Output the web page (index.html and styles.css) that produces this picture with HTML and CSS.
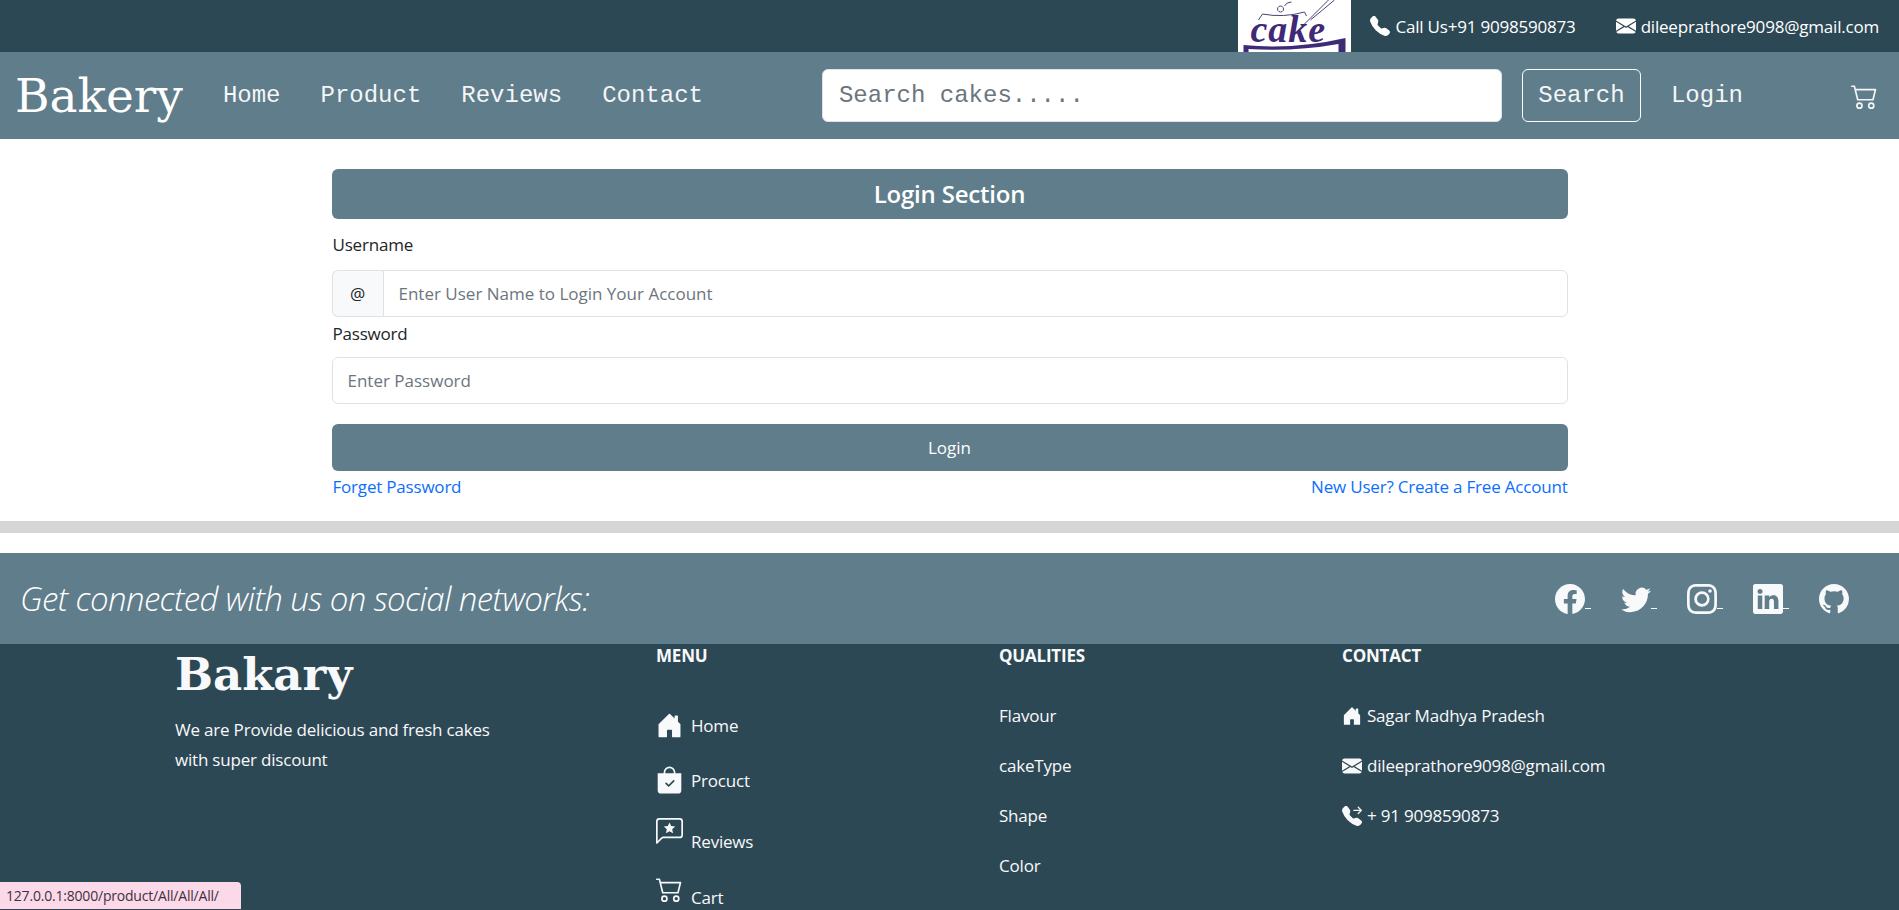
FILE: index.html
```html
<!DOCTYPE html>
<html lang="en">
<head>
<meta charset="utf-8">
<title>Bakery</title>
<link rel="stylesheet" href="styles.css">
</head>
<body>
<div class="topbar">
  <div class="logo">
    <svg class="logo-art" viewBox="0 0 112 52" aria-hidden="true">
      <path d="M20 20 L24 14 Q45 18 66 12 L68 16 M42 12 a3 3 0 1 1 .1 0 M46 6 q2-4 7-4 M66 24 L90 0 M72 20 L96 0" fill="none" stroke="#4a4370" stroke-width="1"/>
      <path d="M5 45 Q55 50 107 38 L107 52 L100 52 L100 44 Q55 52 10 49 L10 52 L5 52 Z" fill="#3f2a78"/>
      <text class="logo-word" x="12" y="42">cake</text>
    </svg>
  </div>
  <span class="top-item"><svg class="top-icon" viewBox="0 0 16 16"><path d="M1.885.511a1.745 1.745 0 0 1 2.61.163L6.29 2.98c.329.423.445.974.315 1.494l-.547 2.19a.678.678 0 0 0 .178.643l2.457 2.457a.678.678 0 0 0 .644.178l2.189-.547a1.745 1.745 0 0 1 1.494.315l2.306 1.794c.829.645.905 1.87.163 2.611l-1.034 1.034c-.74.74-1.846 1.065-2.877.702a18.634 18.634 0 0 1-7.01-4.42 18.634 18.634 0 0 1-4.42-7.009c-.362-1.03-.037-2.137.703-2.877L1.885.511z"/></svg>Call Us+91 9098590873</span>
  <span class="top-item top-mail"><svg class="top-icon" viewBox="0 0 16 16"><path d="M.05 3.555A2 2 0 0 1 2 2h12a2 2 0 0 1 1.95 1.555L8 8.414.05 3.555zM0 4.697v7.104l5.803-3.558L0 4.697zM6.761 8.83l-6.57 4.027A2 2 0 0 0 2 14h12a2 2 0 0 0 1.808-1.144l-6.57-4.027L8 9.586l-1.239-.757zm3.436-.586L16 11.801V4.697l-5.803 3.546z"/></svg>dileeprathore9098@gmail.com</span>
</div>

<nav class="navbar">
  <a class="brand" href="#">Bakery</a>
  <ul class="nav-links">
    <li><a href="#">Home</a></li>
    <li><a href="#">Product</a></li>
    <li><a href="#">Reviews</a></li>
    <li><a href="#">Contact</a></li>
  </ul>
  <form class="search">
    <input class="search-input" type="text" placeholder="Search cakes.....">
    <button class="search-btn" type="button">Search</button>
  </form>
  <a class="nav-login" href="#">Login</a>
  <a class="nav-cart" href="#"><svg viewBox="0 0 16 16"><path d="M0 2.5A.5.5 0 0 1 .5 2H2a.5.5 0 0 1 .485.379L2.89 4H14.5a.5.5 0 0 1 .485.621l-1.5 6A.5.5 0 0 1 13 11H4a.5.5 0 0 1-.485-.379L1.61 3H.5a.5.5 0 0 1-.5-.5zM3.14 5l1.25 5h8.22l1.25-5H3.14zM5 13a1 1 0 1 0 0 2 1 1 0 0 0 0-2zm-2 1a2 2 0 1 1 4 0 2 2 0 0 1-4 0zm9-1a1 1 0 1 0 0 2 1 1 0 0 0 0-2zm-2 1a2 2 0 1 1 4 0 2 2 0 0 1-4 0z"/></svg></a>
</nav>

<main class="login">
  <h2 class="login-title">Login Section</h2>
  <label class="field-label">Username</label>
  <div class="input-group">
    <span class="addon">@</span>
    <input class="field field-joined" type="text" placeholder="Enter User Name to Login Your Account">
  </div>
  <label class="field-label field-label-tight">Password</label>
  <input class="field field-solo" type="password" placeholder="Enter Password">
  <button class="login-btn" type="button">Login</button>
  <div class="login-links">
    <a href="#">Forget Password</a>
    <a href="#">New User? Create a Free Account</a>
  </div>
</main>

<hr class="divider">

<footer class="footer">
  <section class="social">
    <p class="social-text">Get connected with us on social networks:</p>
    <div class="social-icons">
      <a class="social-link" href="#"><svg viewBox="0 0 16 16"><path d="M16 8.049c0-4.446-3.582-8.05-8-8.05C3.58 0-.002 3.603-.002 8.05c0 4.017 2.926 7.347 6.75 7.951v-5.625h-2.03V8.05H6.75V6.275c0-2.017 1.195-3.131 3.022-3.131.876 0 1.791.157 1.791.157v1.98h-1.009c-.993 0-1.303.621-1.303 1.258v1.51h2.218l-.354 2.326H9.25V16c3.824-.604 6.75-3.934 6.75-7.951z"/></svg></a>
      <a class="social-link" href="#"><svg viewBox="0 0 16 16"><path d="M5.026 15c6.038 0 9.341-5.003 9.341-9.334 0-.14 0-.282-.006-.422A6.685 6.685 0 0 0 16 3.542a6.658 6.658 0 0 1-1.889.518 3.301 3.301 0 0 0 1.447-1.817 6.533 6.533 0 0 1-2.087.793A3.286 3.286 0 0 0 7.875 6.03a9.325 9.325 0 0 1-6.767-3.429 3.289 3.289 0 0 0 1.018 4.382A3.323 3.323 0 0 1 .64 6.575v.045a3.288 3.288 0 0 0 2.632 3.218 3.203 3.203 0 0 1-.865.115 3.23 3.23 0 0 1-.614-.057 3.283 3.283 0 0 0 3.067 2.277A6.588 6.588 0 0 1 .78 13.58a6.32 6.32 0 0 1-.78-.045A9.344 9.344 0 0 0 5.026 15z"/></svg></a>
      <a class="social-link" href="#"><svg viewBox="0 0 16 16"><path d="M8 0C5.829 0 5.556.01 4.703.048 3.85.088 3.269.222 2.76.42a3.917 3.917 0 0 0-1.417.923A3.927 3.927 0 0 0 .42 2.76C.222 3.268.087 3.85.048 4.7.01 5.555 0 5.827 0 8.001c0 2.172.01 2.444.048 3.297.04.852.174 1.433.372 1.942.205.526.478.972.923 1.417.444.445.89.719 1.416.923.51.198 1.09.333 1.942.372C5.555 15.99 5.827 16 8 16s2.444-.01 3.298-.048c.851-.04 1.434-.174 1.943-.372a3.916 3.916 0 0 0 1.416-.923c.445-.445.718-.891.923-1.417.197-.509.332-1.09.372-1.942C15.99 10.445 16 10.173 16 8s-.01-2.445-.048-3.299c-.04-.851-.175-1.433-.372-1.941a3.926 3.926 0 0 0-.923-1.417A3.911 3.911 0 0 0 13.24.42c-.51-.198-1.092-.333-1.943-.372C10.443.01 10.172 0 7.998 0h.003zm-.717 1.442h.718c2.136 0 2.389.007 3.232.046.78.035 1.204.166 1.486.275.373.145.64.319.92.599.28.28.453.546.598.92.11.281.24.705.275 1.485.039.843.047 1.096.047 3.231s-.008 2.389-.047 3.232c-.035.78-.166 1.203-.275 1.485a2.47 2.47 0 0 1-.599.919c-.28.28-.546.453-.92.598-.28.11-.704.24-1.485.276-.843.038-1.096.047-3.232.047s-2.39-.009-3.233-.047c-.78-.036-1.203-.166-1.485-.276a2.478 2.478 0 0 1-.92-.598 2.48 2.48 0 0 1-.6-.92c-.109-.281-.24-.705-.275-1.485-.038-.843-.046-1.096-.046-3.233 0-2.136.008-2.388.046-3.231.036-.78.166-1.204.276-1.486.145-.373.319-.64.599-.92.28-.28.546-.453.92-.598.282-.11.705-.24 1.485-.276.738-.034 1.024-.044 2.515-.045v.002zm4.988 1.328a.96.96 0 1 0 0 1.92.96.96 0 0 0 0-1.92zm-4.27 1.122a4.109 4.109 0 1 0 0 8.217 4.109 4.109 0 0 0 0-8.217zm0 1.441a2.667 2.667 0 1 1 0 5.334 2.667 2.667 0 0 1 0-5.334z"/></svg></a>
      <a class="social-link" href="#"><svg viewBox="0 0 16 16"><path d="M0 1.146C0 .513.526 0 1.175 0h13.65C15.474 0 16 .513 16 1.146v13.708c0 .633-.526 1.146-1.175 1.146H1.175C.526 16 0 15.487 0 14.854V1.146zm4.943 12.248V6.169H2.542v7.225h2.401zm-1.2-8.212c.837 0 1.358-.554 1.358-1.248-.015-.709-.52-1.248-1.342-1.248-.822 0-1.359.54-1.359 1.248 0 .694.521 1.248 1.327 1.248h.016zm4.908 8.212V9.359c0-.216.016-.432.08-.586.173-.431.568-.878 1.232-.878.869 0 1.216.662 1.216 1.634v3.865h2.401V9.25c0-2.22-1.184-3.252-2.764-3.252-1.274 0-1.845.7-2.165 1.193v.025h-.016a5.54 5.54 0 0 1 .016-.025V6.169h-2.4c.03.678 0 7.225 0 7.225h2.4z"/></svg></a>
      <a class="social-link social-last" href="#"><svg viewBox="0 0 16 16"><path d="M8 0C3.58 0 0 3.58 0 8c0 3.54 2.29 6.53 5.47 7.59.4.07.55-.17.55-.38 0-.19-.01-.82-.01-1.49-2.01.37-2.53-.49-2.69-.94-.09-.23-.48-.94-.82-1.13-.28-.15-.68-.52-.01-.53.63-.01 1.08.58 1.23.82.72 1.21 1.87.87 2.33.66.07-.52.28-.87.51-1.07-1.78-.2-3.64-.89-3.64-3.95 0-.87.31-1.59.82-2.15-.08-.2-.36-1.02.08-2.12 0 0 .67-.21 2.2.82.64-.18 1.32-.27 2-.27.68 0 1.36.09 2 .27 1.53-1.04 2.2-.82 2.2-.82.44 1.1.16 1.92.08 2.12.51.56.82 1.27.82 2.15 0 3.07-1.87 3.75-3.65 3.95.29.25.54.73.54 1.48 0 1.07-.01 1.93-.01 2.2 0 .21.15.46.55.38A8.012 8.012 0 0 0 16 8c0-4.42-3.58-8-8-8z"/></svg></a>
    </div>
  </section>

  <section class="footer-main">
    <div class="col-about">
      <h3 class="about-title">Bakary</h3>
      <p class="about-text">We are Provide delicious and fresh cakes<br>with super discount</p>
    </div>
    <div class="col-menu">
      <h4 class="col-title">MENU</h4>
      <a class="menu-row menu-home" href="#"><svg class="menu-icon" viewBox="0 0 16 16"><path d="M6.5 14.5v-3.505c0-.245.25-.495.5-.495h2c.25 0 .5.25.5.5v3.5a.5.5 0 0 0 .5.5h4a.5.5 0 0 0 .5-.5v-7a.5.5 0 0 0-.146-.354L13 5.793V2.5a.5.5 0 0 0-.5-.5h-1a.5.5 0 0 0-.5.5v1.293L8.354 1.146a.5.5 0 0 0-.708 0l-6 6A.5.5 0 0 0 1.5 7.5v7a.5.5 0 0 0 .5.5h4a.5.5 0 0 0 .5-.5z"/></svg>Home</a>
      <a class="menu-row menu-product" href="#"><svg class="menu-icon icon-tall" viewBox="0 0 16 16"><path d="M10.5 3.5a2.5 2.5 0 0 0-5 0V4h5v-.5zm1 0V4H15v10a2 2 0 0 1-2 2H3a2 2 0 0 1-2-2V4h3.5v-.5a3.5 3.5 0 1 1 7 0zm-.646 5.354a.5.5 0 0 0-.708-.708L7.5 10.793 6.354 9.646a.5.5 0 1 0-.708.708l1.5 1.5a.5.5 0 0 0 .708 0l3-3z"/></svg>Procuct</a>
      <a class="menu-row menu-reviews" href="#"><svg class="menu-icon" viewBox="0 0 16 16"><path d="M14 1a1 1 0 0 1 1 1v8a1 1 0 0 1-1 1H4.414A2 2 0 0 0 3 11.586l-2 2V2a1 1 0 0 1 1-1h12zM2 0a2 2 0 0 0-2 2v12.793a.5.5 0 0 0 .854.353l2.853-2.853A1 1 0 0 1 4.414 12H14a2 2 0 0 0 2-2V2a2 2 0 0 0-2-2H2z"/><path d="M8 2.6l1 2.2 2.4.3-1.8 1.6.5 2.4L8 7.9 5.9 9.1l.5-2.4-1.8-1.6 2.4-.3z"/></svg>Reviews</a>
      <a class="menu-row menu-cart" href="#"><svg class="menu-icon" viewBox="0 0 16 16"><path d="M0 2.5A.5.5 0 0 1 .5 2H2a.5.5 0 0 1 .485.379L2.89 4H14.5a.5.5 0 0 1 .485.621l-1.5 6A.5.5 0 0 1 13 11H4a.5.5 0 0 1-.485-.379L1.61 3H.5a.5.5 0 0 1-.5-.5zM3.14 5l1.25 5h8.22l1.25-5H3.14zM5 13a1 1 0 1 0 0 2 1 1 0 0 0 0-2zm-2 1a2 2 0 1 1 4 0 2 2 0 0 1-4 0zm9-1a1 1 0 1 0 0 2 1 1 0 0 0 0-2zm-2 1a2 2 0 1 1 4 0 2 2 0 0 1-4 0z"/></svg>Cart</a>
    </div>
    <div class="col-list">
      <h4 class="col-title">QUALITIES</h4>
      <a class="list-row" href="#">Flavour</a>
      <a class="list-row" href="#">cakeType</a>
      <a class="list-row" href="#">Shape</a>
      <a class="list-row" href="#">Color</a>
    </div>
    <div class="col-list">
      <h4 class="col-title">CONTACT</h4>
      <p class="list-row"><svg class="contact-icon" viewBox="0 0 16 16"><path d="M6.5 14.5v-3.505c0-.245.25-.495.5-.495h2c.25 0 .5.25.5.5v3.5a.5.5 0 0 0 .5.5h4a.5.5 0 0 0 .5-.5v-7a.5.5 0 0 0-.146-.354L13 5.793V2.5a.5.5 0 0 0-.5-.5h-1a.5.5 0 0 0-.5.5v1.293L8.354 1.146a.5.5 0 0 0-.708 0l-6 6A.5.5 0 0 0 1.5 7.5v7a.5.5 0 0 0 .5.5h4a.5.5 0 0 0 .5-.5z"/></svg>Sagar Madhya Pradesh</p>
      <p class="list-row"><svg class="contact-icon" viewBox="0 0 16 16"><path d="M.05 3.555A2 2 0 0 1 2 2h12a2 2 0 0 1 1.95 1.555L8 8.414.05 3.555zM0 4.697v7.104l5.803-3.558L0 4.697zM6.761 8.83l-6.57 4.027A2 2 0 0 0 2 14h12a2 2 0 0 0 1.808-1.144l-6.57-4.027L8 9.586l-1.239-.757zm3.436-.586L16 11.801V4.697l-5.803 3.546z"/></svg>dileeprathore9098@gmail.com</p>
      <p class="list-row"><svg class="contact-icon" viewBox="0 0 16 16"><path d="M1.885.511a1.745 1.745 0 0 1 2.61.163L6.29 2.98c.329.423.445.974.315 1.494l-.547 2.19a.678.678 0 0 0 .178.643l2.457 2.457a.678.678 0 0 0 .644.178l2.189-.547a1.745 1.745 0 0 1 1.494.315l2.306 1.794c.829.645.905 1.87.163 2.611l-1.034 1.034c-.74.74-1.846 1.065-2.877.702a18.634 18.634 0 0 1-7.01-4.42 18.634 18.634 0 0 1-4.42-7.009c-.362-1.03-.037-2.137.703-2.877L1.885.511zm10.761.135a.5.5 0 0 1 .708 0l2.5 2.5a.5.5 0 0 1 0 .708l-2.5 2.5a.5.5 0 0 1-.708-.708L14.293 4H9.5a.5.5 0 0 1 0-1h4.793l-1.647-1.646a.5.5 0 0 1 0-.708z"/></svg>+ 91 9098590873</p>
    </div>
  </section>
</footer>

<div class="status-tip">127.0.0.1:8000/product/All/All/All/</div>
</body>
</html>
```
FILE: styles.css
```css
* { box-sizing: border-box; }
html, body { margin: 0; height: 910px; overflow: hidden; }
body { background: #fff; color: #212529; font-family: "Open Sans", "Noto Sans", sans-serif; font-size: 17px; letter-spacing: -0.2px; }
a { text-decoration: none; color: inherit; }
p, h2, h3, h4, ul { margin: 0; padding: 0; }
svg { fill: currentColor; display: block; flex: none; }

.topbar { height: 52px; background: #2d4855; color: #fff; display: flex; align-items: center; justify-content: flex-end; padding-right: 20px; }
.logo { width: 113px; height: 52px; background: #fff; margin-right: 19px; }
.logo-art { width: 113px; height: 52px; }
.logo-word { font-family: "Liberation Serif", serif; font-style: italic; font-weight: 700; font-size: 38px; fill: #3f2a78; letter-spacing: 1px; }
.top-item { display: flex; align-items: center; gap: 5px; }
.top-icon { width: 20px; height: 20px; }
.top-mail { margin-left: 40px; }

.navbar { height: 87px; background: #607d8b; color: #f4f6f7; display: flex; align-items: center; font-family: "Liberation Mono", monospace; font-size: 24px; letter-spacing: 0; }
.brand { font-family: "DejaVu Serif", serif; font-size: 47px; margin-left: 15px; letter-spacing: 0; color: #fff; }
.nav-links { list-style: none; display: flex; margin-left: 20px; }
.nav-links a { display: block; padding: 0 20px; }
.search { display: flex; margin-left: 99px; gap: 20px; }
.search-input { width: 680px; height: 53px; border: 1px solid #dee2e6; border-radius: 6px; padding: 0 16px; font: inherit; color: #212529; background: #fff; }
.search-input::placeholder { color: #6c757d; }
.search-btn { width: 119px; height: 53px; border: 1px solid #fff; border-radius: 6px; background: transparent; color: #f4f6f7; font: inherit; padding: 0; }
.nav-login { margin-left: 30px; }
.nav-cart { margin-left: 108px; width: 27px; }
.nav-cart svg { width: 27px; height: 27px; }

.login { width: 1236px; margin: 30px auto 0; }
.login-title { height: 50px; border-radius: 6px; background: #607d8b; color: #fff; font-size: 24px; font-weight: 600; line-height: 50px; text-align: center; }
.field-label { display: block; margin: 12px 0 12px 1px; line-height: 27px; height: 27px; font-size: 17px; }
.field-label-tight { margin: 3px 0 10px 1px; }
.input-group { display: flex; height: 47px; }
.addon { width: 51px; border: 1px solid #dee2e6; border-right: 0; border-radius: 6px 0 0 6px; background: #f8f9fa; display: flex; align-items: center; justify-content: center; }
.field { height: 47px; border: 1px solid #dee2e6; padding: 0 15px; font: inherit; color: #212529; background: #fff; width: 100%; }
.field::placeholder { color: #6c757d; opacity: 1; }
.field-joined { flex: 1; border-radius: 0 6px 6px 0; }
.field-solo { display: block; border-radius: 6px; }
.login-btn { display: block; width: 100%; height: 47px; margin-top: 20px; border: 0; border-radius: 6px; background: #607d8b; color: #fff; font: inherit; }
.login-links { display: flex; justify-content: space-between; padding: 2px 0 0 1px; line-height: 27px; color: #0d6efd; }

.divider { margin: 21px 0 20px; height: 12px; border: 0; background: #d6d6d6; }

.footer { background: #2d4855; color: #f8f9fa; height: 400px; }
.social { height: 91px; background: #607d8b; display: flex; align-items: center; justify-content: space-between; padding: 0 50px 0 20px; }
.social-text { font-size: 33px; font-style: italic; font-weight: 300; letter-spacing: -0.6px; color: #fff; }
.social-icons { display: flex; gap: 30px; }
.social-link { display: flex; color: #f8f9fa; }
.social-link svg { width: 30px; height: 30px; }
.social-link::after { content: ""; width: 6px; height: 1px; background: #fff; margin-top: 24px; }
.social-last::after { display: none; }

.footer-main { display: flex; padding-left: 175px; }
.col-about { width: 481px; }
.about-title { font-family: "DejaVu Serif", serif; font-size: 45px; font-weight: 700; line-height: 54px; margin-top: 4px; letter-spacing: 0; }
.about-text { margin-top: 13px; line-height: 30px; }
.col-menu, .col-list { width: 343px; }
.col-title { font-size: 17px; font-weight: 700; line-height: 24px; margin-top: 0; }
.menu-row { display: flex; align-items: center; gap: 8px; position: relative; }
.menu-icon { width: 27px; height: 27px; }
.icon-tall { height: 30px; width: 27px; }
.menu-home { margin-top: 32px; height: 50px; }
.menu-product { margin-top: 15px; height: 30px; }
.menu-reviews { margin-top: 24px; align-items: flex-end; height: 34px; }
.menu-reviews .menu-icon { margin-bottom: 8px; }
.menu-cart { margin-top: 16px; align-items: flex-end; height: 40px; }
.menu-cart .menu-icon { margin-bottom: 7px; }
.list-row { display: flex; align-items: center; height: 27px; margin-bottom: 23px; }
.col-title + .list-row { margin-top: 34px; }
.contact-icon { width: 20px; height: 20px; margin-right: 5px; }

.status-tip { position: fixed; left: 0; bottom: 1px; height: 27px; width: 241px; padding-left: 6px; line-height: 27px; font-size: 14px; letter-spacing: -0.2px; color: #3b3140; background: #fcd9e8; border-radius: 0 4px 0 0; }
```
